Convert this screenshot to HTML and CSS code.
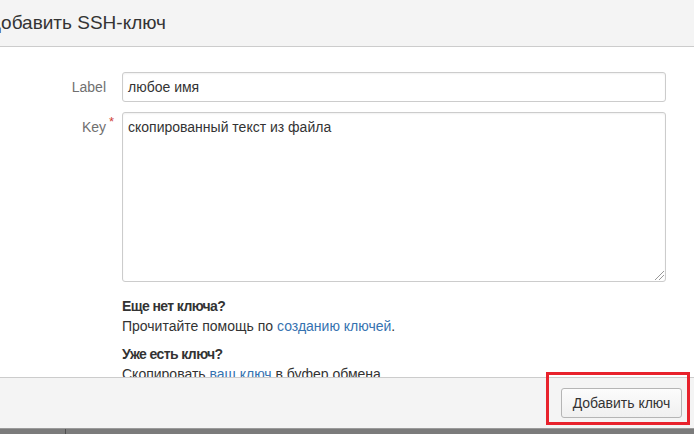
FILE: index.html
```html
<!DOCTYPE html>
<html lang="ru">
<head>
<meta charset="utf-8">
<link rel="stylesheet" href="styles.css">
</head>
<body>
<div class="dialog">
  <header class="dlg-header">
    <h2 class="dlg-title">Добавить SSH-ключ</h2>
  </header>
  <main class="dlg-content">
    <form class="form">
      <label class="field-label">Label</label>
      <div class="field"><div class="input">любое имя</div></div>
      <label class="field-label">Key<span class="req">*</span></label>
      <div class="field"><div class="textarea">скопированный текст из файла<span class="grip"></span></div></div>
      <div></div>
      <div class="help">
        <p class="help-title">Еще нет ключа?</p>
        <p>Прочитайте помощь по <a href="#">созданию ключей</a>.</p>
        <p class="help-title gap">Уже есть ключ?</p>
        <p>Скопировать <a href="#">ваш ключ</a> в буфер обмена.</p>
      </div>
    </form>
  </main>
  <footer class="dlg-footer">
    <button class="btn" type="button">Добавить ключ</button>
    <span class="highlight"></span>
  </footer>
  <div class="taskbar"><span class="tb-left"></span></div>
</div>
</body>
</html>
```
FILE: styles.css
```css
* { box-sizing: border-box; }
html, body { margin: 0; height: 100%; }
body {
  font-family: "Liberation Sans", Arial, sans-serif;
  color: #333;
  font-size: 14px;
  background: #fff;
  overflow: hidden;
}
.dialog {
  height: 434px;
  display: flex;
  flex-direction: column;
}
.dlg-header {
  height: 47px;
  background: #f4f4f4;
  border-bottom: 1px solid #cccccc;
  display: flex;
  align-items: center;
  flex: none;
}
.dlg-title {
  margin: 0 0 0 -12px;
  font-weight: normal;
  font-size: 19px;
  color: #333;
  line-height: 24px;
  padding-bottom: 1px;
}
.dlg-content {
  flex: 1;
  overflow: hidden;
  padding-top: 25px;
}
.form {
  display: grid;
  grid-template-columns: 106px 544px;
  column-gap: 16px;
  row-gap: 10px;
  align-items: start;
}
.field-label {
  text-align: right;
  color: #707070;
  line-height: 20px;
  padding-top: 5px;
  position: relative;
}
.req {
  position: absolute;
  right: -8px;
  top: 0;
  color: #d04437;
  font-size: 13px;
}
.input, .textarea {
  border: 1px solid #cccccc;
  border-radius: 3px;
  background: #fff;
  box-shadow: inset 0 1px 2px rgba(0,0,0,0.06);
  padding: 4px 5px;
  line-height: 20px;
  color: #333;
}
.input { height: 30px; }
.textarea { height: 170px; position: relative; }
.grip {
  position: absolute;
  right: 1px;
  bottom: 1px;
  width: 9px;
  height: 9px;
  background: linear-gradient(135deg, transparent 0 45%, #999 45% 52%, transparent 52% 70%, #999 70% 77%, transparent 77%);
}
.help { padding-top: 4px; }
.help p { margin: 0; line-height: 20px; }
.help-title { font-weight: bold; letter-spacing: -0.6px; }
.help-title.gap { margin-top: 8px !important; }
.help a { color: #3572b0; text-decoration: none; }
.dlg-footer {
  height: 51px;
  flex: none;
  background: #f4f4f4;
  border-top: 1px solid #cccccc;
  display: flex;
  align-items: center;
  justify-content: flex-end;
  padding-right: 12px;
  position: relative;
}
.btn {
  font-family: "Liberation Sans", Arial, sans-serif;
  font-size: 14px;
  color: #333;
  height: 30px;
  width: 121px;
  border: 1px solid #b5b5b5;
  border-radius: 3px;
  background: linear-gradient(#fcfcfc, #f0f0f0);
  padding: 0 10px;
}
.highlight {
  position: absolute;
  left: 546px;
  top: -6px;
  width: 144px;
  height: 53px;
  border: 3px solid #e8222c;
}
.taskbar {
  height: 6px;
  flex: none;
  background: #7b7b7b;
  border-top: 1px solid #9a9a9a;
  position: relative;
}
.tb-left {
  position: absolute;
  left: 65px;
  top: 0;
  bottom: 0;
  width: 1px;
  background: #4f4f4f;
}
```
